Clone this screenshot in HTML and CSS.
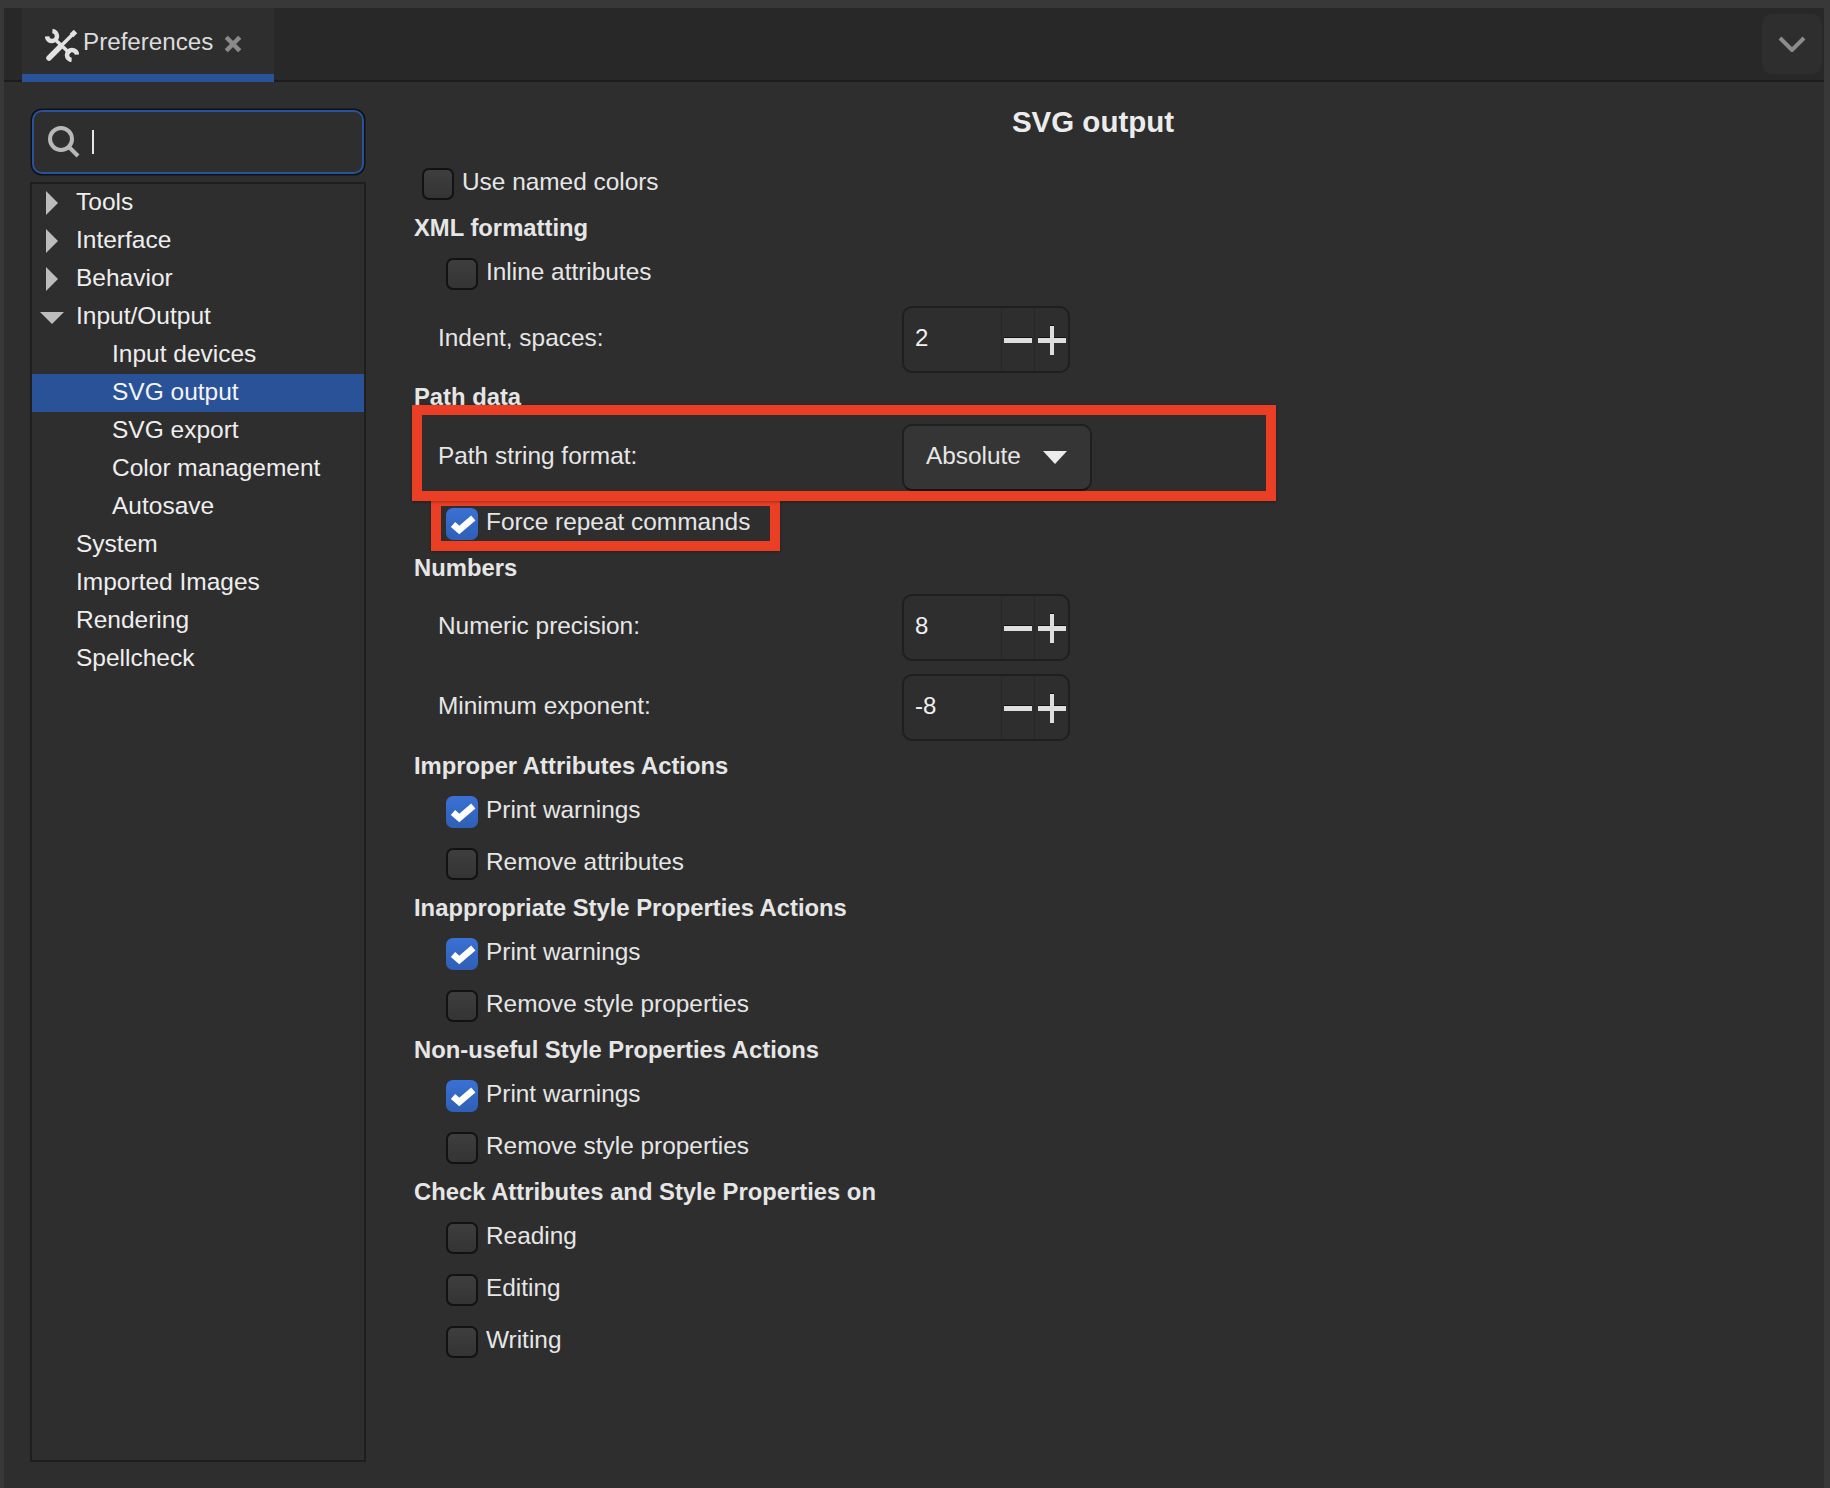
FILE: index.html
```html
<!DOCTYPE html>
<html lang="en">

<head>
    <meta charset="UTF-8">
    <title>Preferences</title>
    <link rel="stylesheet" href="styles.css">
</head>

<body>
    <div class="window">
        <div class="tab-bar">
            <div class="tab">
                <svg class="tab-icon" viewBox="0 0 34 34">
                    <path class="tool-thick" d="M4 30 L15 19" />
                    <path class="tool-thin" d="M13 21 L27 7" />
                    <path class="tool-tip" d="M26.500 7.500 L30.500 3.500" />
                    <path class="tool-thin" d="M9 10.500 L25 25.500" />
                    <path class="tool-jaw" d="M7.400 3 A5 5 0 1 1 2 8.400" />
                    <path class="tool-jaw" d="M26.600 32 A5 5 0 1 1 32 26.600" />
                </svg>
                <span class="tab-title">Preferences</span>
                <svg class="tab-close" viewBox="0 0 16 16">
                    <path d="M2 2 L14 14 M14 2 L2 14" />
                </svg>
            </div>
            <div class="tab-menu">
                <svg viewBox="0 0 28 16">
                    <path d="M2 2 L14 14 L26 2" />
                </svg>
            </div>
        </div>

        <div class="main">
            <div class="sidebar">
                <div class="search">
                    <svg class="search-icon" viewBox="0 0 32 32">
                        <circle cx="13" cy="13" r="11" />
                        <path d="M21 21 L30 30" />
                    </svg>
                    <span class="caret"></span>
                </div>
                <div class="tree">
                    <div class="tree-row"><span class="arrow-right"></span>Tools</div>
                    <div class="tree-row"><span class="arrow-right"></span>Interface</div>
                    <div class="tree-row"><span class="arrow-right"></span>Behavior</div>
                    <div class="tree-row"><span class="arrow-down"></span>Input/Output</div>
                    <div class="tree-row child">Input devices</div>
                    <div class="tree-row child selected">SVG output</div>
                    <div class="tree-row child">SVG export</div>
                    <div class="tree-row child">Color management</div>
                    <div class="tree-row child">Autosave</div>
                    <div class="tree-row">System</div>
                    <div class="tree-row">Imported Images</div>
                    <div class="tree-row">Rendering</div>
                    <div class="tree-row">Spellcheck</div>
                </div>
            </div>

            <div class="content">
                <h1>SVG output</h1>

                <div class="check-row first"><span class="box"></span>Use named colors</div>

                <h2>XML formatting</h2>
                <div class="check-row"><span class="box"></span>Inline attributes</div>
                <div class="field-row indent-row">
                    <span class="field-label">Indent, spaces:</span>
                    <div class="spin">
                        <span class="spin-value">2</span>
                        <span class="spin-btn"><svg viewBox="0 0 28 30"><rect class="shade" x="0" y="12" width="28" height="1" /><rect x="0" y="13" width="28" height="5" /></svg></span>
                        <span class="spin-btn"><svg viewBox="0 0 28 30"><rect class="shade" x="0" y="12" width="28" height="1" /><rect class="shade" x="12" y="0" width="4" height="1" /><rect x="0" y="13" width="28" height="5" /><rect x="12" y="1" width="4" height="29" /></svg></span>
                    </div>
                </div>

                <h2 class="path-head">Path data</h2>
                <div class="field-row format-row">
                    <span class="field-label">Path string format:</span>
                    <div class="combo"><span class="combo-text">Absolute</span><span class="combo-arrow"></span></div>
                </div>
                <div class="check-row force-row"><span class="box on"><svg viewBox="0 0 32 32"><path d="M7 16.500 L13.300 22 L27.300 10" /></svg></span>Force repeat commands</div>

                <h2 class="numbers-head">Numbers</h2>
                <div class="field-row precision-row">
                    <span class="field-label">Numeric precision:</span>
                    <div class="spin">
                        <span class="spin-value">8</span>
                        <span class="spin-btn"><svg viewBox="0 0 28 30"><rect class="shade" x="0" y="12" width="28" height="1" /><rect x="0" y="13" width="28" height="5" /></svg></span>
                        <span class="spin-btn"><svg viewBox="0 0 28 30"><rect class="shade" x="0" y="12" width="28" height="1" /><rect class="shade" x="12" y="0" width="4" height="1" /><rect x="0" y="13" width="28" height="5" /><rect x="12" y="1" width="4" height="29" /></svg></span>
                    </div>
                </div>
                <div class="field-row exponent-row">
                    <span class="field-label">Minimum exponent:</span>
                    <div class="spin">
                        <span class="spin-value">-8</span>
                        <span class="spin-btn"><svg viewBox="0 0 28 30"><rect class="shade" x="0" y="12" width="28" height="1" /><rect x="0" y="13" width="28" height="5" /></svg></span>
                        <span class="spin-btn"><svg viewBox="0 0 28 30"><rect class="shade" x="0" y="12" width="28" height="1" /><rect class="shade" x="12" y="0" width="4" height="1" /><rect x="0" y="13" width="28" height="5" /><rect x="12" y="1" width="4" height="29" /></svg></span>
                    </div>
                </div>

                <h2 class="improper-head">Improper Attributes Actions</h2>
                <div class="check-row"><span class="box on"><svg viewBox="0 0 32 32"><path d="M7 16.500 L13.300 22 L27.300 10" /></svg></span>Print warnings</div>
                <div class="check-row"><span class="box"></span>Remove attributes</div>

                <h2>Inappropriate Style Properties Actions</h2>
                <div class="check-row"><span class="box on"><svg viewBox="0 0 32 32"><path d="M7 16.500 L13.300 22 L27.300 10" /></svg></span>Print warnings</div>
                <div class="check-row"><span class="box"></span>Remove style properties</div>

                <h2>Non-useful Style Properties Actions</h2>
                <div class="check-row"><span class="box on"><svg viewBox="0 0 32 32"><path d="M7 16.500 L13.300 22 L27.300 10" /></svg></span>Print warnings</div>
                <div class="check-row"><span class="box"></span>Remove style properties</div>

                <h2>Check Attributes and Style Properties on</h2>
                <div class="check-row"><span class="box"></span>Reading</div>
                <div class="check-row"><span class="box"></span>Editing</div>
                <div class="check-row"><span class="box"></span>Writing</div>
            </div>
        </div>
    </div>

    <!-- red annotation boxes drawn over the screenshot -->
    <div class="mark mark-force"></div>
    <div class="mark mark-format"></div>
</body>

</html>
```

FILE: styles.css
```css
* {
    margin: 0;
    padding: 0;
    box-sizing: border-box;
}

html,
body {
    height: 100%;
    overflow: hidden;
}

body {
    position: relative;
    background-color: #383838;
    padding: 8px 6px 0 4px;
    font-family: "Liberation Sans", Arial, sans-serif;
    font-size: 24.4px;
    color: #e6e6e6;
}

.window {
    height: 100%;
    display: flex;
    flex-direction: column;
    background-color: #2e2e2e;
}

/* tab bar */
.tab-bar {
    height: 74px;
    display: flex;
    justify-content: space-between;
    background-color: #282828;
    border-bottom: 2px solid #1c1c1c;
    padding-left: 18px;
}

.tab {
    width: 252px;
    height: 74px;
    display: flex;
    align-items: flex-start;
    background-color: #2e2e2e;
    border-bottom: 8px solid #2a5299;
    padding: 20px 0 0 23px;
}

.tab-icon {
    width: 34px;
    height: 34px;
    flex: none;
}

.tab-icon path {
    fill: none;
    stroke: #e2e2e2;
}

.tool-thick {
    stroke-width: 5.500;
    stroke-linecap: round;
}

.tool-thin {
    stroke-width: 3.500;
}

.tool-tip {
    stroke-width: 5;
}

.tool-jaw {
    stroke-width: 4.500;
}

.tab-title {
    margin-left: 4px;
    line-height: 28px;
    font-size: 24.200px;
    color: #dcdcdc;
}

.tab-close {
    width: 18px;
    height: 18px;
    margin: 7px 0 0 11px;
}

.tab-close path {
    fill: none;
    stroke: #8a8a8a;
    stroke-width: 4;
}

.tab-menu {
    width: 60px;
    height: 60px;
    margin: 6px 2px 0 0;
    display: flex;
    align-items: center;
    justify-content: center;
    background-color: #2e2e2e;
    border-radius: 10px;
}

.tab-menu svg {
    width: 28px;
    height: 16px;
}

.tab-menu path {
    fill: none;
    stroke: #8c8c8c;
    stroke-width: 4;
}

/* main area */
.main {
    flex: 1;
    display: flex;
}

.sidebar {
    width: 336px;
    margin-left: 26px;
    padding-top: 28px;
    display: flex;
    flex-direction: column;
    flex: none;
}

.search {
    width: 332px;
    height: 64px;
    display: flex;
    align-items: center;
    padding-left: 14px;
    background-color: #2e2e2e;
    border: 2px solid #2a5299;
    border-radius: 10px;
    box-shadow: 0 0 0 1.500px #0e1118;
    margin-left: 2px;
}

.search-icon {
    width: 32px;
    height: 32px;
}

.search-icon circle,
.search-icon path {
    fill: none;
    stroke: #b8b8b8;
    stroke-width: 4;
}

.caret {
    width: 2px;
    height: 24px;
    margin-left: 12px;
    background-color: #e6e6e6;
}

.tree {
    width: 336px;
    height: 1280px;
    margin-top: 8px;
    border: 2px solid #1e1e1e;
    font-size: 24.500px;
}

.tree-row {
    height: 38px;
    line-height: 36px;
    padding-left: 44px;
    position: relative;
    color: #eeeeee;
}

.tree-row.child {
    padding-left: 80px;
}

.tree-row.selected {
    background-color: #2a5299;
    color: #f4f4f4;
}

.arrow-right {
    position: absolute;
    left: 14px;
    top: 7px;
    border-left: 12px solid #bcbcbc;
    border-top: 12px solid transparent;
    border-bottom: 12px solid transparent;
}

.arrow-down {
    position: absolute;
    left: 8px;
    top: 14px;
    border-top: 12px solid #bcbcbc;
    border-left: 12px solid transparent;
    border-right: 12px solid transparent;
}

/* settings column */
.content {
    flex: 1;
    padding-left: 48px;
}

h1 {
    height: 74px;
    padding: 24px 0 0 0;
    font-size: 29.500px;
    line-height: 32px;
    text-align: center;
    margin-right: 52px;
    color: #ececec;
}

h2 {
    height: 36px;
    margin-top: 2px;
    line-height: 36px;
    font-size: 23.800px;
    color: #e6e6e6;
}

.check-row {
    height: 52px;
    display: flex;
    align-items: center;
    gap: 8px;
    padding-left: 32px;
}

.check-row.first {
    padding-left: 8px;
}

.box {
    width: 32px;
    height: 32px;
    flex: none;
    margin-top: 3px;
    background: linear-gradient(#3e3e3e, #343434);
    border: 2px solid #121212;
    border-radius: 7px;
}

.box.on {
    background: linear-gradient(#3a71d4, #2f5fb6);
    border: none;
}

.box svg {
    display: block;
    width: 32px;
    height: 32px;
}

.box path {
    fill: none;
    stroke: #ffffff;
    stroke-width: 6.500;
}

.field-row {
    height: 67px;
    display: flex;
    align-items: center;
    padding-left: 24px;
}

.field-label {
    width: 464px;
    padding-bottom: 4px;
}

.indent-row {
    margin-top: 8px;
}

.path-head {
    margin-top: 6px;
}

.format-row {
    margin-top: 9px;
}

.force-row {
    margin-top: 5px;
}

.numbers-head {
    margin-top: 2px;
}

.precision-row {
    margin-top: 8px;
}

.exponent-row {
    margin-top: 13px;
}

.improper-head {
    margin-top: 7px;
}

.spin {
    width: 168px;
    height: 67px;
    display: flex;
    border: 2px solid #1f1f1f;
    border-radius: 10px;
    font-size: 24px;
}

.spin-value {
    width: 98px;
    padding-left: 11px;
    line-height: 60px;
    color: #f0f0f0;
}

.spin-btn {
    width: 34px;
    display: flex;
    align-items: center;
    justify-content: center;
    border-left: 1px solid #272727;
}

.spin-btn svg {
    width: 28px;
    height: 30px;
}

.spin-btn rect {
    fill: #dedede;
}

.spin-btn rect.shade {
    fill: #111111;
}

.combo {
    width: 190px;
    height: 67px;
    display: flex;
    align-items: center;
    padding-left: 22px;
    background-color: #353535;
    border: 2px solid #1f1f1f;
    border-bottom-color: #141414;
    border-radius: 10px;
}

.combo-text {
    padding-bottom: 4px;
}

.combo-arrow {
    margin-left: 22px;
    border-top: 13px solid #ececec;
    border-left: 12px solid transparent;
    border-right: 12px solid transparent;
}

/* annotation */
.mark {
    position: absolute;
    border: 10px solid #ea3f25;
    box-shadow: 0 1px 3px rgba(0, 0, 0, 0.3);
}

.mark-format {
    left: 412px;
    top: 405px;
    width: 864px;
    height: 96px;
}

.mark-force {
    left: 431px;
    top: 496px;
    width: 349px;
    height: 55px;
}
```
